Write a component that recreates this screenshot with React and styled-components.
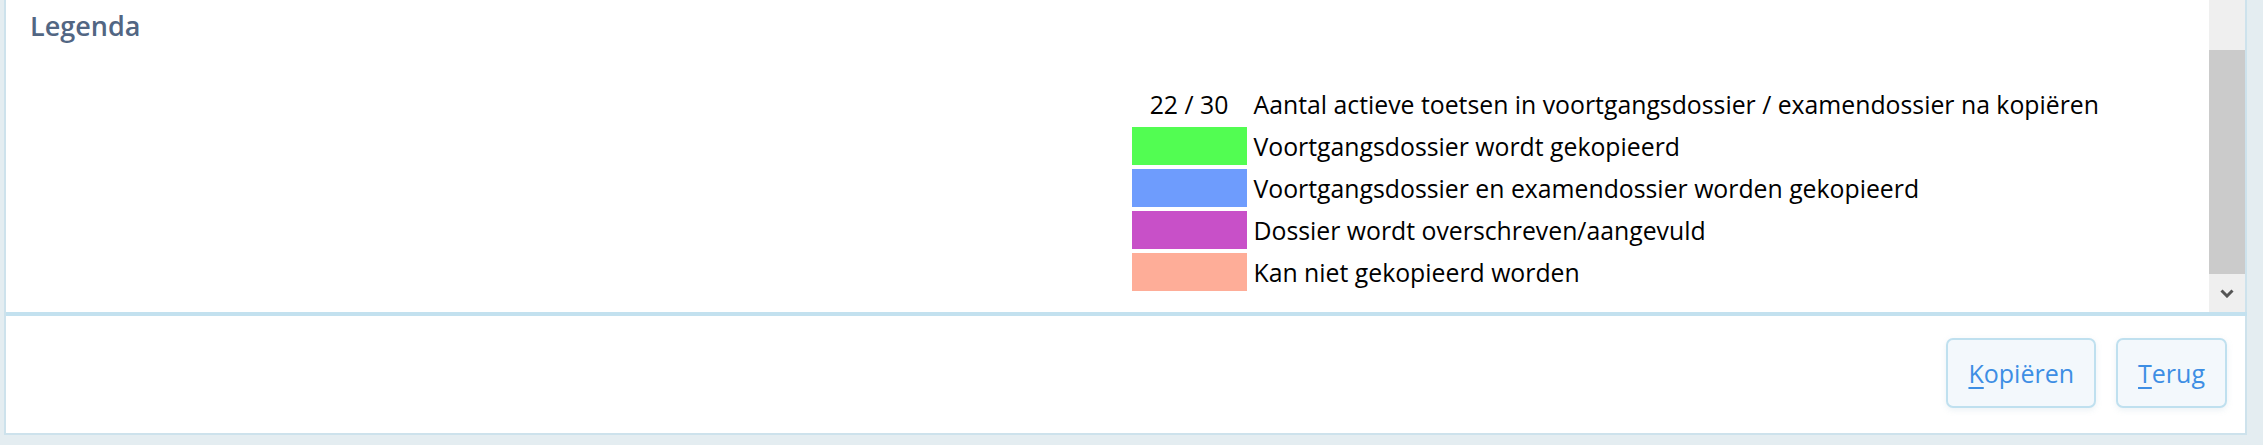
import React from "react";
import styled, { createGlobalStyle } from "styled-components";

const GlobalStyle = createGlobalStyle`
  html, body {
    margin: 0;
    padding: 0;
    background: #e4edf1;
    font-family: "Open Sans", "Liberation Sans", sans-serif;
  }
`;

const Page = styled.div`
  height: 445px;
  box-sizing: border-box;
  padding: 0 16px 10px 4px;
  display: flex;
`;

const Dialog = styled.div`
  flex: 1;
  display: flex;
  flex-direction: column;
  background: #fff;
  border: 2px solid #cde2ec;
  border-top: none;
`;

const Body = styled.div`
  height: 312px;
  display: flex;
`;

const Content = styled.div`
  flex: 1;
  display: grid;
  grid-template-columns: 1fr 1fr;
  grid-template-rows: auto 1fr;
`;

const Title = styled.h2`
  grid-column: 1 / 3;
  margin: 0;
  padding: 8px 0 0 24px;
  font-size: 27px;
  font-weight: 600;
  color: #526683;
  line-height: 36px;
`;

const Legend = styled.div`
  grid-column: 2;
  align-self: start;
  margin: 41px 0 0 24px;
  display: grid;
  grid-template-columns: 115px auto;
  grid-auto-rows: 38px;
  column-gap: 7px;
  row-gap: 4px;
  font-size: 24.8px;
  color: #000;
`;

const Key = styled.div`
  background: ${(p) => p.color || "transparent"};
  display: flex;
  align-items: center;
  justify-content: center;
`;

const Label = styled.div`
  display: flex;
  align-items: center;
  white-space: nowrap;
`;

const Scrollbar = styled.div`
  width: 36px;
  background: #efefef;
  display: flex;
  flex-direction: column;
`;

const Thumb = styled.div`
  margin-top: 50px;
  height: 224px;
  background: #cbcbcb;
`;

const Arrow = styled.div`
  flex: 1;
  display: flex;
  align-items: center;
  justify-content: center;
`;

const Divider = styled.div`
  height: 4px;
  background: #c3e1ef;
  margin-right: -2px;
`;

const Footer = styled.div`
  flex: 1;
  display: flex;
  justify-content: flex-end;
  align-items: flex-start;
  gap: 20px;
  padding: 22px 18px 0 0;
`;

const Button = styled.button`
  height: 70px;
  padding: 0 20px;
  box-sizing: border-box;
  background: #f3f8fc;
  border: 2px solid #bfe0ef;
  border-radius: 7px;
  box-shadow: 0 2px 6px rgba(120, 160, 190, 0.15);
  font-family: "Open Sans", "Liberation Sans", sans-serif;
  font-size: 25px;
  color: #3d8ee4;
  cursor: pointer;

  u {
    text-decoration-thickness: 2px;
    text-underline-offset: 4px;
  }
`;

const legendRows = [
  { color: "#52fd52", text: "Voortgangsdossier wordt gekopieerd" },
  { color: "#6e9cfd", text: "Voortgangsdossier en examendossier worden gekopieerd" },
  { color: "#c850c8", text: "Dossier wordt overschreven/aangevuld" },
  { color: "#fead98", text: "Kan niet gekopieerd worden" },
];

export default function App() {
  return (
    <>
      <GlobalStyle />
      <Page>
        <Dialog>
          <Body>
            <Content>
              <Title>Legenda</Title>
              <Legend>
                <Key>22 / 30</Key>
                <Label>
                  Aantal actieve toetsen in voortgangsdossier / examendossier na kopiëren
                </Label>
                {legendRows.map((row) => (
                  <React.Fragment key={row.text}>
                    <Key color={row.color} />
                    <Label>{row.text}</Label>
                  </React.Fragment>
                ))}
              </Legend>
            </Content>
            <Scrollbar>
              <Thumb />
              <Arrow>
                <svg width="14" height="9" viewBox="0 0 14 9">
                  <path d="M1.5 1.5 L7 7 L12.5 1.5" fill="none" stroke="#555" strokeWidth="3" />
                </svg>
              </Arrow>
            </Scrollbar>
          </Body>
          <Divider />
          <Footer>
            <Button>
              <u>K</u>opiëren
            </Button>
            <Button>
              <u>T</u>erug
            </Button>
          </Footer>
        </Dialog>
      </Page>
    </>
  );
}
